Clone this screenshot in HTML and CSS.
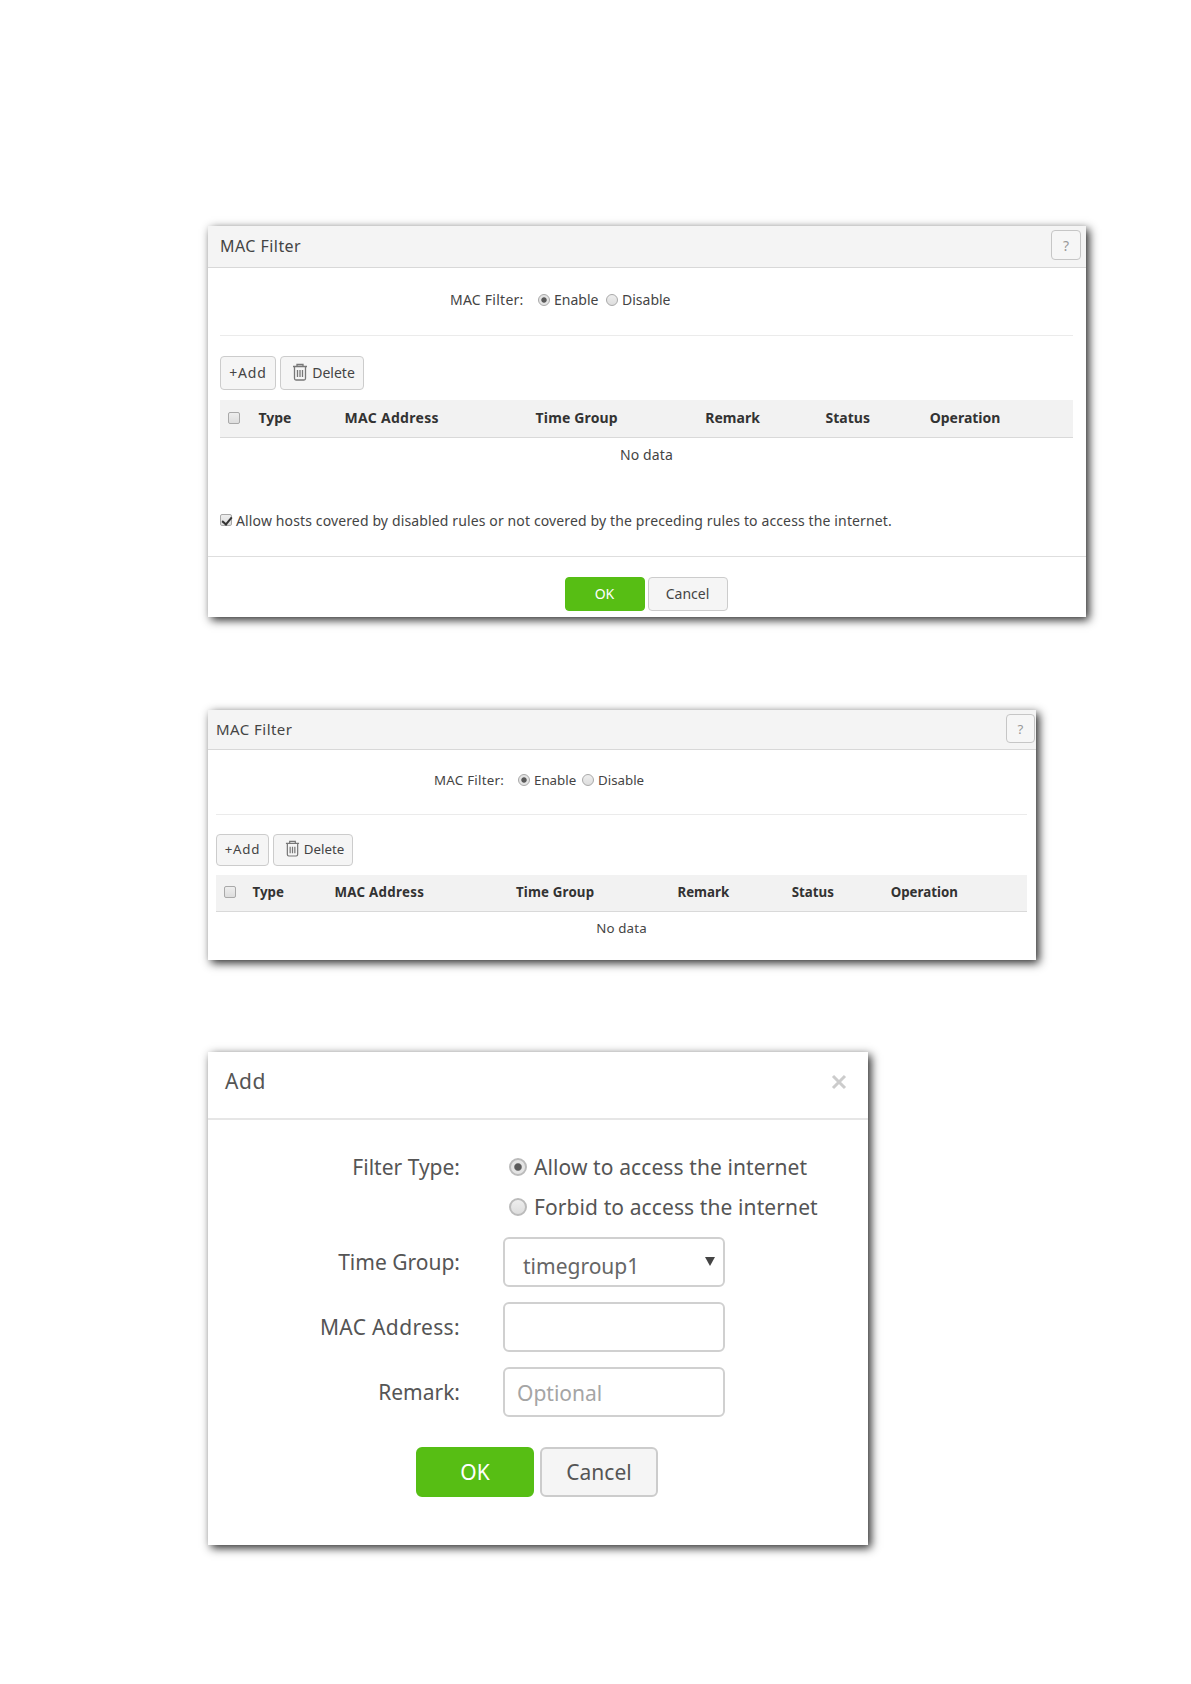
FILE: index.html
```html
<!DOCTYPE html>
<html lang="en">

<head>
    <meta charset="UTF-8">
    <meta name="viewport" content="width=device-width, initial-scale=1.0">
    <title>MAC Filter</title>
    <link rel="stylesheet" href="styles.css">
</head>

<body>
    <section class="panel panel-full">
        <header class="panel-head">
            <h2>MAC Filter</h2>
            <button class="help">?</button>
        </header>
        <div class="panel-body">
            <div class="switch">
                <span class="switch-label">MAC Filter:</span>
                <label><input type="radio" name="filter1" checked><span>Enable</span></label>
                <label><input type="radio" name="filter1"><span>Disable</span></label>
            </div>
            <div class="toolbar">
                <button class="btn btn-add"><span>+Add</span></button>
                <button class="btn btn-delete">
                    <svg class="trash" viewBox="0 0 16 18">
                        <path d="M1 3.5h14M5 3V1.5h6V3M2.5 4v11.5q0 1.5 1.5 1.5h8q1.5 0 1.5-1.5V4M5.5 7v7M8 7v7M10.5 7v7" />
                    </svg>
                    <span>Delete</span>
                </button>
            </div>
            <table>
                <thead>
                    <tr>
                        <th class="col-check"><input type="checkbox"></th>
                        <th class="col-type">Type</th>
                        <th class="col-mac">MAC Address</th>
                        <th class="col-time">Time Group</th>
                        <th class="col-remark">Remark</th>
                        <th class="col-status">Status</th>
                        <th>Operation</th>
                    </tr>
                </thead>
                <tbody>
                    <tr>
                        <td colspan="7">No data</td>
                    </tr>
                </tbody>
            </table>
            <label class="allow"><input type="checkbox" checked><span>Allow hosts covered by disabled rules or not covered by the preceding rules to access the internet.</span></label>
        </div>
        <footer class="panel-foot">
            <button class="btn btn-ok">OK</button>
            <button class="btn btn-cancel">Cancel</button>
        </footer>
    </section>

    <section class="panel panel-small">
        <header class="panel-head">
            <h2>MAC Filter</h2>
            <button class="help">?</button>
        </header>
        <div class="panel-body">
            <div class="switch">
                <span class="switch-label">MAC Filter:</span>
                <label><input type="radio" name="filter2" checked><span>Enable</span></label>
                <label><input type="radio" name="filter2"><span>Disable</span></label>
            </div>
            <div class="toolbar">
                <button class="btn btn-add"><span>+Add</span></button>
                <button class="btn btn-delete">
                    <svg class="trash" viewBox="0 0 16 18">
                        <path d="M1 3.5h14M5 3V1.5h6V3M2.5 4v11.5q0 1.5 1.5 1.5h8q1.5 0 1.5-1.5V4M5.5 7v7M8 7v7M10.5 7v7" />
                    </svg>
                    <span>Delete</span>
                </button>
            </div>
            <table>
                <thead>
                    <tr>
                        <th class="col-check"><input type="checkbox"></th>
                        <th class="col-type">Type</th>
                        <th class="col-mac">MAC Address</th>
                        <th class="col-time">Time Group</th>
                        <th class="col-remark">Remark</th>
                        <th class="col-status">Status</th>
                        <th>Operation</th>
                    </tr>
                </thead>
                <tbody>
                    <tr>
                        <td colspan="7">No data</td>
                    </tr>
                </tbody>
            </table>
        </div>
    </section>

    <section class="panel dialog">
        <header class="dialog-head">
            <h2>Add</h2>
            <button class="close" aria-label="Close">
                <svg viewBox="0 0 16 16">
                    <path d="M2 2l12 12M14 2L2 14" />
                </svg>
            </button>
        </header>
        <form class="dialog-form">
            <div class="row row-type">
                <span class="row-label">Filter Type:</span>
                <div class="choices">
                    <label><input type="radio" name="type" checked><span>Allow to access the internet</span></label>
                    <label><input type="radio" name="type"><span>Forbid to access the internet</span></label>
                </div>
            </div>
            <div class="row">
                <span class="row-label">Time Group:</span>
                <div class="field select">
                    <span>timegroup1</span>
                    <i class="arrow"></i>
                </div>
            </div>
            <div class="row">
                <span class="row-label label-mac">MAC Address:</span>
                <input class="field" type="text">
            </div>
            <div class="row">
                <span class="row-label">Remark:</span>
                <input class="field" type="text" placeholder="Optional">
            </div>
        </form>
        <footer class="dialog-foot">
            <button class="btn btn-ok">OK</button>
            <button class="btn btn-cancel">Cancel</button>
        </footer>
    </section>
</body>

</html>
```

FILE: styles.css
```css
* {
    box-sizing: border-box;
}

body {
    margin: 0;
    padding: 226px 0 0 208px;
    background-color: white;
    color: #444;
    font-family: "Noto Sans", "Open Sans", sans-serif;
    font-size: 14px;
    height: 1684px;
    overflow: hidden;
}

h2 {
    margin: 0;
    font-weight: 400;
}

button,
input {
    margin: 0;
    padding: 0;
    font: inherit;
    color: inherit;
    letter-spacing: inherit;
}

label {
    display: flex;
    align-items: center;
}

.panel {
    background-color: #fff;
    box-shadow: 3px 3px 9px rgba(0, 0, 0, 0.85);
}

.panel-full {
    width: 878px;
    height: 391px;
    margin-bottom: 93px;
}

.panel-small {
    width: 828px;
    height: 250px;
    margin-bottom: 92px;
    font-size: 13.3px;
}

/* header bar */
.panel-head {
    display: flex;
    justify-content: space-between;
    height: 42px;
    padding: 4px 5px 0 12px;
    background-color: #f4f4f4;
    border-bottom: 1px solid #d8d8d8;
}

.panel-head h2 {
    font-size: 16px;
    line-height: 33px;
    letter-spacing: 0.45px;
}

.panel-small .panel-head {
    height: 40px;
    padding: 4px 1px 0 8px;
}

.panel-small .panel-head h2 {
    font-size: 15px;
    line-height: 31px;
}

.help {
    width: 30px;
    height: 30px;
    border: 1px solid #c6c6c6;
    border-radius: 4px;
    background-color: #f6f6f6;
    color: #999;
}

.panel-small .help {
    width: 29px;
    height: 29px;
}

.panel-body {
    padding: 0 13px 0 12px;
}

.panel-small .panel-body {
    padding: 0 9px 0 8px;
}

.switch {
    display: flex;
    align-items: center;
    height: 68px;
    padding: 0 0 4px 230px;
    border-bottom: 1px solid #ebebeb;
}

.panel-small .switch {
    height: 65px;
    padding-left: 218px;
}

.switch-label {
    width: 88px;
    letter-spacing: 0.25px;
}

.panel-small .switch-label {
    width: 84px;
}

.switch label {
    width: 68px;
}

.panel-small .switch label {
    width: 64px;
}

/* form controls */
input[type="radio"],
input[type="checkbox"] {
    appearance: none;
    flex: none;
    width: 12px;
    height: 12px;
    border: 1px solid #a9a9a9;
    background: linear-gradient(#eee, #ddd);
}

input[type="radio"] {
    border-radius: 50%;
    margin-right: 4px;
}

input[type="radio"]:checked {
    background: radial-gradient(circle, #5a5a5a 0, #5a5a5a 32%, #e4e4e4 44%);
}

input[type="checkbox"] {
    display: block;
    border-radius: 2px;
}

.allow input {
    position: relative;
    margin-right: 4px;
}

.allow input::after {
    content: "";
    position: absolute;
    left: 3px;
    top: 0;
    width: 4px;
    height: 8px;
    border: solid #333;
    border-width: 0 2px 2px 0;
    transform: rotate(40deg);
}

.btn {
    display: flex;
    align-items: center;
    justify-content: center;
    height: 34px;
    padding-bottom: 2px;
    border: 1px solid #ccc;
    border-radius: 4px;
    background-color: #f5f5f5;
}

.btn-ok {
    border-color: #55be14;
    background-color: #57be14;
    color: #fff;
}

.toolbar {
    display: flex;
    gap: 4px;
    margin: 20px 0 10px;
}

.btn-add {
    width: 56px;
    letter-spacing: 0.8px;
}

.btn-delete {
    width: 84px;
    padding-left: 3px;
    gap: 4px;
}

.panel-small .toolbar {
    margin: 19px 0 9px;
}

.panel-small .btn {
    width: 53px;
    height: 32px;
}

.panel-small .btn-delete {
    width: 80px;
}

.trash {
    width: 16px;
    height: 18px;
    margin-top: -1px;
    fill: none;
    stroke: #777;
    stroke-width: 1.3;
}

.panel-small .trash {
    width: 15px;
    height: 17px;
}

/* rules table */
table {
    width: 100%;
    table-layout: fixed;
    border-collapse: collapse;
}

th {
    height: 37px;
    padding: 0 0 1px;
    background-color: #f2f2f2;
    border-bottom: 1px solid #d9d9d9;
    text-align: left;
    font-weight: 700;
    color: #333;
}

td {
    height: 36px;
    padding: 0 0 1px;
    text-align: center;
    letter-spacing: 0.15px;
}

.panel-small th {
    height: 36px;
}

.panel-small td {
    height: 35px;
}

.col-check {
    width: 4.5%;
    padding-left: 8px;
}

.col-type {
    width: 10.1%;
}

.col-mac {
    width: 22.4%;
    letter-spacing: 0.3px;
}

.col-time {
    width: 19.9%;
    letter-spacing: 0.15px;
}

.col-remark {
    width: 14.1%;
}

.col-status {
    width: 12.2%;
}

.allow {
    height: 24px;
    margin-top: 35px;
    letter-spacing: 0.13px;
}

.panel-foot {
    display: flex;
    justify-content: center;
    gap: 3px;
    margin-top: 24px;
    padding: 20px 2px 0 0;
    border-top: 1px solid #dedede;
}

.panel-foot .btn {
    width: 80px;
}

/* add dialog */
.dialog {
    width: 660px;
    height: 493px;
    font-size: 21px;
    color: #555;
}

.dialog-head {
    display: flex;
    justify-content: space-between;
    height: 68px;
    padding: 0 21px 0 17px;
    border-bottom: 2px solid #e6e6e6;
}

.dialog-head h2 {
    font-size: 21px;
    line-height: 58px;
    letter-spacing: 0.6px;
}

.close {
    width: 16px;
    height: 60px;
    border: 0;
    background: none;
}

.close svg {
    display: block;
    width: 16px;
    height: 16px;
    stroke: #ccc;
    stroke-width: 3;
}

.dialog-form {
    display: flex;
    flex-direction: column;
    gap: 15px;
    padding-top: 27px;
}

.row {
    display: flex;
    height: 50px;
}

.row-type {
    height: 75px;
}

.row-label {
    width: 252px;
    margin-right: 43px;
    text-align: right;
    line-height: 50px;
}

.label-mac {
    letter-spacing: 0.35px;
}

.row-type .row-label {
    line-height: 40px;
}

.choices {
    padding-left: 6px;
    letter-spacing: 0.1px;
}

.choices label {
    height: 40px;
}

.choices input[type="radio"] {
    width: 18px;
    height: 18px;
    margin-right: 7px;
    border-width: 2px;
    border-color: #bbb;
}

.field {
    width: 222px;
    height: 50px;
    padding: 2px 12px 0;
    border: 2px solid #d0d0d0;
    border-radius: 6px;
    background-color: #fff;
}

.field::placeholder {
    color: #a5a5a5;
}

.select {
    display: flex;
    align-items: center;
    justify-content: space-between;
    padding: 7px 8px 0 18px;
    color: #666;
}

.arrow {
    margin-bottom: 8px;
    border: solid transparent;
    border-width: 9px 5px 0;
    border-top-color: #444;
}

.dialog-foot {
    display: flex;
    justify-content: center;
    gap: 6px;
    margin-top: 30px;
    padding-right: 2px;
}

.dialog-foot .btn {
    width: 118px;
    height: 50px;
    padding-bottom: 0;
    border-width: 2px;
    border-radius: 6px;
}
```
